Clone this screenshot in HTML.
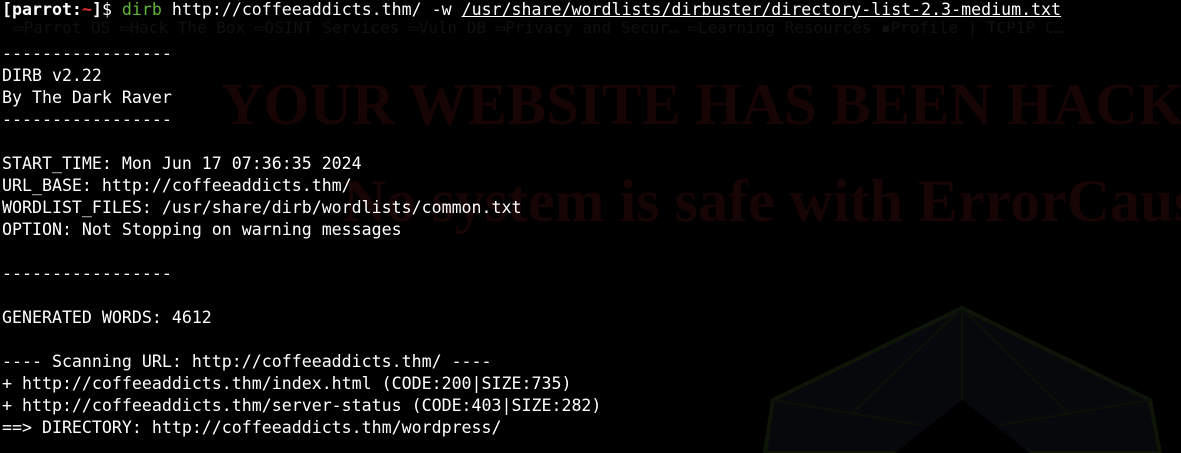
<!DOCTYPE html>
<html><head><meta charset="utf-8"><style>
html,body{margin:0;padding:0;background:#000;width:1181px;height:453px;overflow:hidden;position:relative}
.clip{position:absolute;left:0;top:0;width:1181px;height:453px;overflow:hidden}
.bg{position:absolute;font-family:"Liberation Serif","DejaVu Serif",serif;font-weight:bold;color:#170404;white-space:nowrap;line-height:60px}
.bm{position:absolute;left:14px;top:18px;font-family:"DejaVu Sans Mono",monospace;font-size:16px;color:#101010;white-space:nowrap}
pre{position:absolute;left:2px;top:-1px;margin:0;font-family:"DejaVu Sans Mono","Liberation Mono",monospace;font-size:16.6px;line-height:22px;color:#fff;z-index:2}
.g{color:#5fb536}.r{color:#e03030}.u{text-decoration:underline}
</style></head><body>
<div class="clip">
<div class="bm">▭Parrot OS ▭Hack The Box ▭OSINT Services ▭Vuln DB ▭Privacy and Secur… ▭Learning Resources ▪Profile | TCP1P C…</div>
<div class="bg" style="left:221px;top:74px;font-size:59px">YOUR WEBSITE HAS BEEN HACKED</div>
<div class="bg" style="left:343px;top:171px;font-size:60px">No system is safe with ErrorCause</div>
<svg style="position:absolute;left:0;top:0" width="1181" height="453">
<polygon points="962,308 1150,400 1160,453 765,453 773,400" fill="#07080c" stroke="#0e1508" stroke-width="4"/>
<g stroke="#0b1106" stroke-width="2" fill="none">
<line x1="962" y1="308" x2="962" y2="400"/><line x1="962" y1="308" x2="850" y2="415"/><line x1="962" y1="308" x2="1070" y2="415"/>
<line x1="773" y1="400" x2="920" y2="425"/><line x1="1150" y1="400" x2="1000" y2="425"/>
</g>
<polygon points="962,400 1030,453 895,453" fill="#000"/>
</svg>
</div>
<pre><b>[parrot:<span class="r">~</span>]</b>$ <span class="g">dirb</span> http://coffeeaddicts.thm/ -w <span class="u">/usr/share/wordlists/dirbuster/directory-list-2.3-medium.txt</span>

-----------------
DIRB v2.22
By The Dark Raver
-----------------

START_TIME: Mon Jun 17 07:36:35 2024
URL_BASE: http://coffeeaddicts.thm/
WORDLIST_FILES: /usr/share/dirb/wordlists/common.txt
OPTION: Not Stopping on warning messages

-----------------

GENERATED WORDS: 4612

---- Scanning URL: http://coffeeaddicts.thm/ ----
+ http://coffeeaddicts.thm/index.html (CODE:200|SIZE:735)
+ http://coffeeaddicts.thm/server-status (CODE:403|SIZE:282)
==&gt; DIRECTORY: http://coffeeaddicts.thm/wordpress/
</pre>
</body></html>
